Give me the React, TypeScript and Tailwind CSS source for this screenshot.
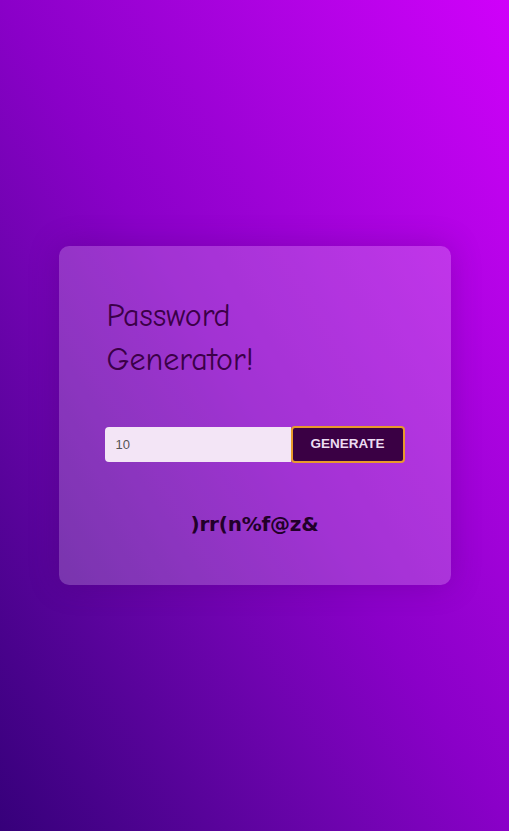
export default function App() {
  return (
    <main className="flex min-h-[831px] w-full items-center justify-center bg-gradient-to-tr from-[#36007a] via-[#8a00c8] to-[#d000fa]">
      <section className="flex h-[339px] w-[392px] flex-col rounded-[10px] bg-white/20 px-[46px] pt-[48px] shadow-[0_0_30px_rgba(60,0,90,0.25)]">
        <h1 className="pl-[2px] font-['Comic_Sans_MS','Comic_Neue',cursive] text-[32px] leading-[44px] text-[#3b0048]">
          Password
          <br />
          Generator!
        </h1>

        <div className="mt-[44px] flex h-[37px] items-stretch font-['Liberation_Sans',Arial,sans-serif]">
          <input
            defaultValue="10"
            className="my-px w-[186px] rounded-l-[4px] bg-[#f3e5f6] px-[11px] text-[13px] text-[#555] outline-none"
          />
          <button className="flex-1 rounded-[4px] border-2 border-[#e89a2c] bg-[#3a0044] text-[13.5px] font-bold text-[#ecdcf2]">
            GENERATE
          </button>
        </div>

        <p className="mt-[46px] text-center font-['DejaVu_Sans',Verdana,sans-serif] text-[20px] font-bold tracking-[-0.2px] text-[#220029]">
          )rr(n%f@z&amp;
        </p>
      </section>
    </main>
  );
}
